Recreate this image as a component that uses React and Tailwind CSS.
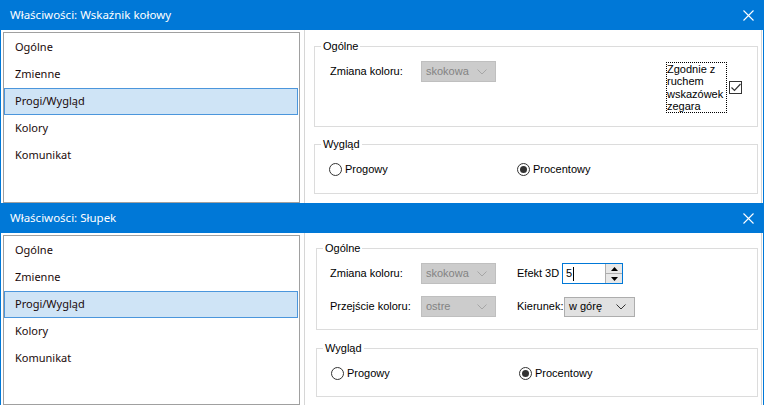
import React from "react";

const uiFont = { fontFamily: '"Noto Sans", "Open Sans", sans-serif' };
const formFont = { fontFamily: '"Liberation Sans", Arial, sans-serif' };

const items = ["Ogólne", "Zmienne", "Progi/Wygląd", "Kolory", "Komunikat"];

function CloseIcon() {
  return (
    <svg width="11" height="11" viewBox="0 0 11 11" className="mr-[9px]">
      <path d="M0.5 0.5 L10.5 10.5 M10.5 0.5 L0.5 10.5" stroke="#fff" strokeWidth="1.1" />
    </svg>
  );
}

function Chevron({ color }) {
  return (
    <svg width="10" height="6" viewBox="0 0 10 6">
      <polyline points="0.5,0.5 5,5 9.5,0.5" fill="none" stroke={color} strokeWidth="1" />
    </svg>
  );
}

function Select({ value, disabled, width = "w-[75px]", height = "h-[21px]" }) {
  return (
    <div
      className={`${width} ${height} flex items-center justify-between pl-[4px] pr-[8px] border ${
        disabled ? "bg-[#cccccc] border-[#bfbfbf] text-[#838383]" : "bg-[#e1e1e1] border-[#adadad] text-black"
      }`}
    >
      <span>{value}</span>
      <Chevron color={disabled ? "#a6a6a6" : "#333"} />
    </div>
  );
}

function Radio({ label, checked }) {
  return (
    <div className="flex items-center gap-[3px]">
      <div className="w-[13px] h-[13px] rounded-full border border-[#333] bg-white flex items-center justify-center">
        {checked && <div className="w-[7px] h-[7px] rounded-full bg-[#333]" />}
      </div>
      <span>{label}</span>
    </div>
  );
}

function GroupBox({ title, className, children }) {
  return (
    <div className={`relative border border-[#dcdcdc] ${className}`}>
      <span className="absolute -top-[8px] left-[6px] bg-white px-[2px] leading-[14px]">{title}</span>
      {children}
    </div>
  );
}

function Wyglad({ className }) {
  return (
    <GroupBox title="Wygląd" className={className}>
      <div className="flex items-center pl-[14px] pt-[16px]">
        <div className="w-[188px]">
          <Radio label="Progowy" />
        </div>
        <Radio label="Procentowy" checked />
      </div>
    </GroupBox>
  );
}

function Window({ title, height, bodyPt, panelMl, children }) {
  return (
    <div className={`${height} flex flex-col overflow-hidden border-x border-[#0078d7]`}>
      <div className="h-[30px] shrink-0 bg-[#0078d7] flex items-center justify-between pl-[9px] text-white text-[11.5px]" style={uiFont}>
        <span>{title}</span>
        <CloseIcon />
      </div>
      <div className="flex-1 flex bg-white pr-[1px] min-h-0">
        <div className="ml-[2px] mt-[2px] w-[297px] shrink-0 border border-[#a0a0a0] pt-[1px] text-[11px] text-[#1a0a0a]" style={uiFont}>
          {items.map((it) => (
            <div
              key={it}
              className={`h-[27px] flex items-center pl-[10px] mr-[1px] border ${
                it === "Progi/Wygląd" ? "bg-[#cfe4f6] border-[#4b96dc]" : "border-transparent"
              }`}
            >
              {it}
            </div>
          ))}
        </div>
        <div className={`ml-[4px] flex-1 border-x border-[#d6d6d6] ${bodyPt} text-[11px] text-black`} style={formFont}>
          <div className={`${panelMl} mr-[3px] flex flex-col`}>{children}</div>
        </div>
      </div>
    </div>
  );
}

export default function App() {
  return (
    <div className="w-[764px] h-[405px] overflow-hidden bg-white">
      <Window title="Właściwości: Wskaźnik kołowy" height="h-[203px]" bodyPt="pt-[16px]" panelMl="ml-[9px]">
        <GroupBox title="Ogólne" className="h-[81px]">
          <div className="flex items-start pt-[14px] pl-[15px] pr-[15px]">
            <div className="w-[91px] h-[21px] flex items-center">Zmiana koloru:</div>
            <Select value="skokowa" disabled />
            <div className="flex-1" />
            <div className="flex items-center gap-[2px] mt-[1px]">
              <div className="w-[61px] h-[51px] border border-dotted border-black leading-[12.3px] overflow-hidden">
                Zgodnie z<br />ruchem<br />wskazówek<br />zegara
              </div>
              <div className="w-[13px] h-[13px] border border-[#333] bg-white flex items-center justify-center">
                <svg width="10" height="9" viewBox="0 0 10 9">
                  <polyline points="0.5,4.5 3.5,7.5 9.5,1" fill="none" stroke="#333" strokeWidth="1.2" />
                </svg>
              </div>
            </div>
          </div>
        </GroupBox>
        <Wyglad className="h-[50px] mt-[17px]" />
      </Window>
      <Window title="Właściwości: Słupek" height="h-[202px]" bodyPt="pt-[15px]" panelMl="ml-[11px]">
        <GroupBox title="Ogólne" className="h-[82px]">
          <div className="flex flex-col gap-[12px] pt-[14px] pl-[13px]">
            <div className="flex items-center">
              <div className="w-[91px]">Zmiana koloru:</div>
              <Select value="skokowa" disabled />
              <div className="ml-[21px] w-[45px]">Efekt 3D</div>
              <div className="w-[61px] h-[21px] flex border border-[#0078d7] bg-white">
                <div className="flex-1 flex items-center pl-[3px]">
                  <span>5</span>
                  <span className="w-[1px] h-[14px] bg-black ml-[1px]" />
                </div>
                <div className="w-[17px] flex flex-col border-l border-[#adadad]">
                  <div className="flex-1 bg-[#e8e8e8] border-b border-[#adadad] flex items-center justify-center">
                    <svg width="7" height="4" viewBox="0 0 7 4"><polygon points="3.5,0 7,4 0,4" fill="#000" /></svg>
                  </div>
                  <div className="flex-1 bg-[#e8e8e8] flex items-center justify-center">
                    <svg width="7" height="4" viewBox="0 0 7 4"><polygon points="0,0 7,0 3.5,4" fill="#000" /></svg>
                  </div>
                </div>
              </div>
            </div>
            <div className="flex items-center">
              <div className="w-[91px]">Przejście koloru:</div>
              <Select value="ostre" disabled />
              <div className="ml-[21px] w-[47px]">Kierunek:</div>
              <Select value="w górę" width="w-[71px]" height="h-[20px]" />
            </div>
          </div>
        </GroupBox>
        <Wyglad className="h-[49px] mt-[18px]" />
      </Window>
    </div>
  );
}
